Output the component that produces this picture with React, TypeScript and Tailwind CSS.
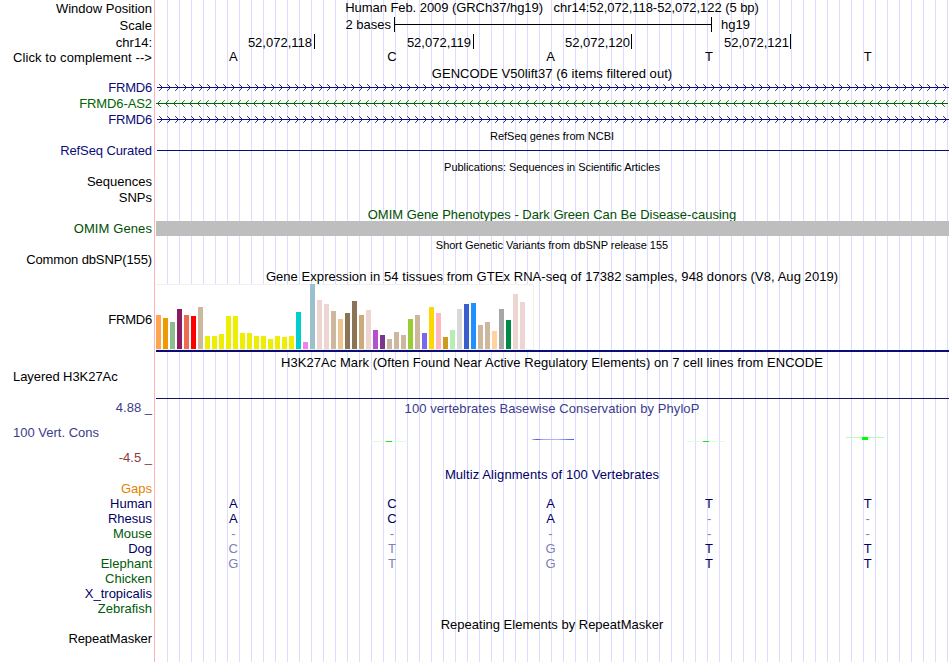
import React from 'react';
import { clsx } from 'clsx';

interface TrackLabel {
  text: string;
  className: string;
}

const labels: TrackLabel[] = [
  { text: 'Window Position', className: 'h-[17px]' },
  { text: 'Scale', className: 'h-[17px]' },
  { text: 'chr14:', className: 'h-[17px]' },
  { text: 'Click to complement -->', className: 'h-[15px] tracking-[0.09px]' },
  { text: 'FRMD6', className: 'h-[30px] tracking-[-0.2px] text-[#0c0c78]' },
  { text: 'FRMD6-AS2', className: 'h-4 tracking-[-0.1px] text-[#006400]' },
  { text: 'FRMD6', className: 'h-4 tracking-[-0.2px] text-[#0c0c78]' },
  { text: 'RefSeq Curated', className: 'h-[31px] tracking-[-0.1px] text-[#0c0c78]' },
  { text: 'Sequences', className: 'h-[31px]' },
  { text: 'SNPs', className: 'h-4' },
  { text: 'OMIM Genes', className: 'h-[31px] tracking-[0.1px] text-[#005000]' },
  { text: 'Common dbSNP(155)', className: 'h-[31px] tracking-[-0.12px]' },
  { text: 'FRMD6', className: 'h-[60px] tracking-[-0.2px]' },
  { text: 'Layered H3K27Ac', className: 'h-[57px] self-start ml-[13px] tracking-[-0.06px]' },
  { text: '4.88 _', className: 'h-[31px] text-[#3c3c8c]' },
  { text: '100 Vert. Cons', className: 'h-[25px] self-start ml-[13px] text-[#3c3c8c]' },
  { text: '-4.5 _', className: 'h-[25px] text-[#8c3c3c]' },
  { text: 'Gaps', className: 'h-[31px] text-[#e68200]' },
  { text: 'Human', className: 'h-[15px] text-[#000064]' },
  { text: 'Rhesus', className: 'h-[15px] text-[#000064]' },
  { text: 'Mouse', className: 'h-[15px] text-[#005a0a]' },
  { text: 'Dog', className: 'h-[15px] text-[#000064]' },
  { text: 'Elephant', className: 'h-[15px] text-[#005a0a]' },
  { text: 'Chicken', className: 'h-[15px] text-[#005a0a]' },
  { text: 'X_tropicalis', className: 'h-[15px] text-[#000064]' },
  { text: 'Zebrafish', className: 'h-[15px] text-[#005a0a]' },
  { text: 'RepeatMasker', className: 'h-[30px] tracking-[-0.08px]' },
];

const tissues: [string, number][] = [
  ['#ffa54f', 34], ['#ee9a00', 31], ['#8fbc8f', 27], ['#8b1c62', 40], ['#ee6a50', 34], ['#ff0000', 33],
  ['#cdb79e', 42], ['#eeee00', 13], ['#eeee00', 13], ['#eeee00', 15], ['#eeee00', 33], ['#eeee00', 33],
  ['#eeee00', 16], ['#eeee00', 16], ['#eeee00', 13], ['#eeee00', 13], ['#eeee00', 10], ['#eeee00', 13],
  ['#eeee00', 12], ['#eeee00', 13], ['#00cdcd', 37], ['#ee82ee', 7], ['#9ac0cd', 65], ['#eed5d2', 49],
  ['#eed5d2', 45], ['#cdb79e', 38], ['#eec591', 30], ['#8b7355', 36], ['#8b7355', 48], ['#cdaa7d', 34],
  ['#eed5d2', 39], ['#b452cd', 19], ['#7a378b', 14], ['#cdb79e', 10], ['#cdb79e', 17], ['#cdb79e', 14],
  ['#9acd32', 30], ['#cdb79e', 34], ['#7a67ee', 16], ['#ffd700', 42], ['#ffb6c1', 36], ['#cd9b1d', 12],
  ['#b4eeb4', 19], ['#d9d9d9', 40], ['#3a5fcd', 45], ['#1e90ff', 46], ['#cdb79e', 24], ['#cdb79e', 27],
  ['#ffd39b', 18], ['#a6a6a6', 40], ['#008b45', 29], ['#eed5d2', 55], ['#eed5d2', 47], ['#ff00ff', 0],
];

// Lower case marks a base that differs from the human one
const alignments = ['ACATT', 'ACA--', '-----', 'ctgTT', 'gtgTT'];

interface TitleProps {
  className: string;
  children: React.ReactNode;
}

const Title: React.FC<TitleProps> = ({ className, children }) => (
  <div className={clsx('flex items-end justify-center pr-px whitespace-pre', className)}>
    <span>{children}</span>
  </div>
);

const BaseRow: React.FC<{ bases: string; className: string }> = ({ bases, className }) => (
  <div className={clsx('-ml-[2px] mr-[2px] grid grid-cols-5 content-end text-center', className)}>
    {bases.split('').map((base, i) => (
      <span key={i} className={clsx(/[a-z-]/.test(base) && 'text-[#8080b4]')}>
        {base.toUpperCase()}
      </span>
    ))}
  </div>
);

const GeneLine: React.FC<{ reverse?: boolean }> = ({ reverse }) => {
  const color = reverse ? '#006400' : '#0c0c78';
  const tips = Array.from({ length: 99 }, (_, i) => (reverse ? 1 : 6) + i * 8);
  return (
    <svg width="793" height="9" className="block" shapeRendering="crispEdges">
      <rect x={reverse ? 0 : 1} y="4" width="792" height="1" fill={color} />
      {tips.map((x) => (
        <g key={x} fill={color}>
          {[1, 2, 3].map((d) => (
            <g key={d} opacity={d === 3 ? 0.7 : 0.9}>
              <rect x={reverse ? x + d : x - d} y={4 - d} width="1" height="1" />
              <rect x={reverse ? x + d : x - d} y={4 + d} width="1" height="1" />
            </g>
          ))}
        </g>
      ))}
    </svg>
  );
};

const ExpressionChart: React.FC = () => (
  <div className="-mt-px flex h-[66px] w-[378px] items-end gap-[2px] border-r border-b border-[#f0f0f0] bg-white shadow-[inset_0_1px_0_#f0f0f0]">
    {tissues.map(([color, height], i) => (
      <div key={i} className="w-[5px] shrink-0" style={{ height, backgroundColor: color }} />
    ))}
  </div>
);

const Conservation: React.FC = () => (
  <svg width="793" height="8" className="block" shapeRendering="crispEdges">
    <defs>
      <linearGradient id="score">
        <stop offset="0" stopColor="#b4b4ff" />
        <stop offset="0.12" stopColor="#5050e6" />
        <stop offset="0.25" stopColor="#a0a0ff" />
        <stop offset="0.6" stopColor="#b4b4ff" />
        <stop offset="1" stopColor="#5050e6" />
      </linearGradient>
    </defs>
    <rect x="215" y="6" width="37" height="1" fill="#e1fae1" />
    <rect x="230" y="6" width="6" height="1" fill="#1ee61e" />
    <rect x="376" y="4" width="42" height="1" fill="url(#score)" />
    <rect x="531" y="6" width="38" height="1" fill="#e1fae1" />
    <rect x="547" y="6" width="6" height="1" fill="#1ee61e" />
    <rect x="690" y="2" width="38" height="1" fill="#b4ffb4" />
    <rect x="706" y="2" width="6" height="3" fill="#00ff00" />
  </svg>
);

export default function App() {
  return (
    <div className="flex h-[662px] w-[950px] overflow-hidden bg-white font-['Liberation_Sans',Arial,sans-serif] text-[13px] leading-4 text-black">
      <div className="flex w-[154px] shrink-0 flex-col items-end pr-[2px]">
        {labels.map((label, i) => (
          <div key={i} className={clsx('flex shrink-0 items-end whitespace-pre', label.className)}>
            <span>{label.text}</span>
          </div>
        ))}
      </div>
      <div className="w-px bg-[#ffb4b4]" />

      <div className="ml-px flex w-[793px] flex-col bg-[repeating-linear-gradient(90deg,transparent_0_11px,#dcdcff_11px_12px)]">
        <Title className="h-4 tracking-[-0.06px]">
          Human Feb. 2009 (GRCh37/hg19)   chr14:52,072,118-52,072,122 (5 bp)
        </Title>

        {/* Scale bar */}
        <div className="flex h-[17px]">
          <div className="mt-px w-[235px] text-right">2 bases</div>
          <div className="mt-px ml-[3px] flex h-[15px] w-[318px] items-center border-x border-black">
            <div className="h-px w-full bg-black" />
          </div>
          <div className="mt-px ml-[9px]">hg19</div>
        </div>

        {/* Base positions */}
        <div className="flex h-[18px] items-start pt-px text-right leading-[18px]">
          <div className="h-[15px] w-[159px] border-r border-black pr-[2px]">52,072,118</div>
          <div className="h-[15px] w-[159px] border-r border-black pr-[2px]">52,072,119</div>
          <div className="h-[15px] w-[158px] border-r border-black pr-px">52,072,120</div>
          <div className="h-[15px] w-[159px] border-r border-black pr-px">52,072,121</div>
        </div>
        <BaseRow bases="ACATT" className="h-[14px]" />

        {/* Genes */}
        <Title className="h-[17px] tracking-[0.05px]">GENCODE V50lift37 (6 items filtered out)</Title>
        <div className="mt-px flex flex-col gap-[7px]">
          <GeneLine />
          <GeneLine reverse />
          <GeneLine />
        </div>
        <Title className="h-5 text-[11px]">RefSeq genes from NCBI</Title>
        <div className="mt-[6px] ml-px h-px bg-[#0c0c78]" />

        <Title className="h-6 text-[11px] tracking-[-0.04px]">Publications: Sequences in Scientific Articles</Title>
        <Title className="h-12 text-[#005000]">OMIM Gene Phenotypes - Dark Green Can Be Disease-causing</Title>
        <div className="-mt-[2px] h-[15px] bg-[#bebebe]" />
        <Title className="h-[17px] text-[11px] tracking-[-0.02px]">Short Genetic Variants from dbSNP release 155</Title>

        {/* Expression */}
        <Title className="h-8 tracking-[0.055px]">
          Gene Expression in 54 tissues from GTEx RNA-seq of 17382 samples, 948 donors (V8, Aug 2019)
        </Title>
        <ExpressionChart />
        <div className="h-[2px] bg-[#0c0c78]" />

        <Title className="h-[19px] tracking-[0.05px]">
          H3K27Ac Mark (Often Found Near Active Regulatory Elements) on 7 cell lines from ENCODE
        </Title>
        <div className="mt-[27px] h-px bg-[#14145a]" />

        {/* Conservation */}
        <Title className="h-[18px] tracking-[0.06px] text-[#3c3c8c]">
          100 vertebrates Basewise Conservation by PhyloP
        </Title>
        <div className="mt-[18px]">
          <Conservation />
        </div>
        <Title className="h-10 tracking-[0.09px] text-[#000064]">Multiz Alignments of 100 Vertebrates</Title>
        <div className="mt-[14px] text-[#000064]">
          {alignments.map((bases, i) => (
            <BaseRow key={i} bases={bases} className="h-[15px]" />
          ))}
        </div>
        <Title className="h-[61px]">Repeating Elements by RepeatMasker</Title>
      </div>
    </div>
  );
}
